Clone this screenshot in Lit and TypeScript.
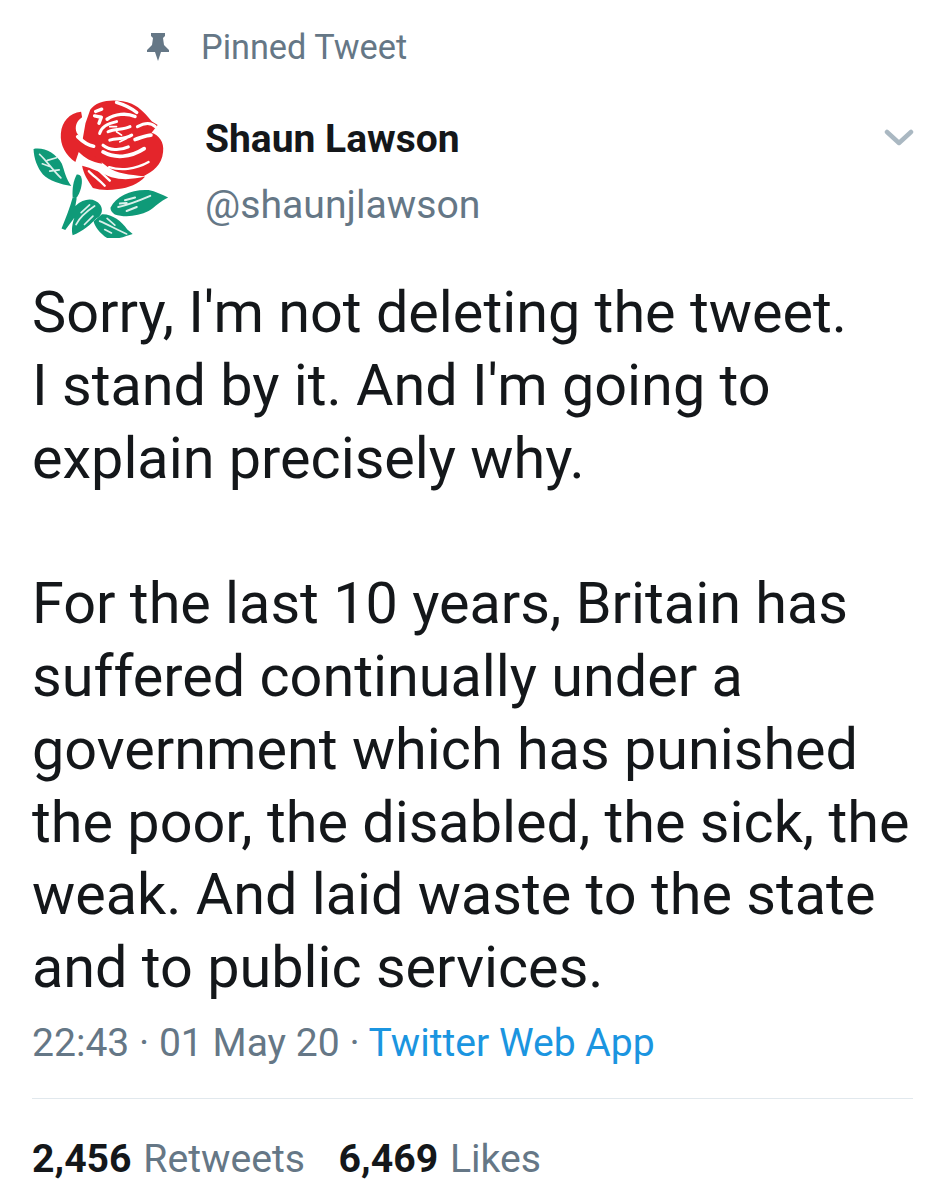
import { LitElement, html, css, svg } from "lit";
import { customElement } from "lit/decorators.js";

const rose = svg`
<g fill="#e4252b">
<path d="M125 160 C128 125 150 100 185 96 L188 112 C172 122 165 140 172 158 C185 180 215 195 235 220 L248 250 C215 245 195 232 178 215 L168 245 C140 225 122 195 125 160Z"/>
<path d="M212 90 C232 60 290 55 335 72 C362 84 378 105 395 125 L412 135 L394 158 C415 165 432 185 428 215 C424 255 398 272 370 287 C330 282 290 280 262 258 C230 235 205 210 190 175 L198 130Z"/>
<path d="M188 256 C215 262 245 278 275 290 C310 300 345 295 375 288 C355 310 325 322 295 325 C265 330 240 328 220 322 C205 300 192 280 188 256Z"/>
</g>
<g fill="none" stroke="#fff" stroke-linecap="round" stroke-linejoin="round">
<path stroke-width="10" d="M228 95 L246 88 M225 108 L245 112 L238 130 M290 68 C310 74 330 82 350 98 M262 118 C285 102 320 98 345 110"/>
<path stroke-width="9" d="M240 160 C245 140 265 130 290 125 M265 155 C285 145 310 150 330 140 M270 180 C290 172 310 180 335 165 M250 195 C268 210 300 212 325 200 M352 140 C370 130 390 125 405 140"/>
<path stroke-width="11" d="M175 170 C190 185 205 195 222 198 M250 215 C285 235 330 232 372 205 M345 178 C365 172 380 165 392 165"/>
<path stroke-width="7" d="M268 260 C300 270 345 268 385 245 M230 262 L270 300 M208 272 C220 285 235 295 255 315"/>
<path stroke-width="5" d="M290 155 L305 165 M270 140 L290 140 M300 185 L320 175"/>
</g>
<g fill="#0f9a78">
<path d="M44 206 C75 200 110 218 128 250 C136 272 140 295 156 316 C125 312 90 300 72 282 C55 260 45 235 44 206Z"/>
<path d="M172 282 C185 280 190 295 186 315 C182 335 176 345 170 352 L160 350 C158 325 162 300 172 282Z"/>
<path d="M160 350 L172 352 L168 375 C195 350 225 350 242 372 C252 388 245 405 230 412 C215 428 190 450 160 462 C155 445 160 425 165 410 L138 446 L127 442 C140 410 152 380 160 350Z"/>
<path d="M246 400 C275 398 305 420 322 445 L338 458 C315 465 285 478 262 470 C240 455 225 435 222 420 Z"/>
<path d="M272 380 C290 345 335 325 385 328 C405 332 425 342 443 350 C420 360 405 378 385 390 C355 405 315 410 285 400 C277 395 272 388 272 380Z"/>
</g>
<g fill="none" stroke="#fff" stroke-linecap="round" stroke-opacity="0.85">
<path stroke-width="5" d="M62 222 C80 238 95 262 125 292 M85 240 L112 232 M70 250 L92 258 M92 272 L120 268"/>
<path stroke-width="6" d="M295 378 C325 372 355 360 390 345 M315 358 L345 350 M320 390 L350 378 M300 368 L320 366"/>
<path stroke-width="5" d="M170 430 C180 410 195 395 225 375 M185 395 L210 372 M195 430 L220 405"/>
<path stroke-width="5" d="M240 420 C265 430 290 445 320 458 M262 412 L285 432 M255 445 L275 455"/>
</g>`;

@customElement("app-root")
export class AppRoot extends LitElement {
  static styles = css`
    :host {
      display: block;
      width: 945px;
      height: 1200px;
      box-sizing: border-box;
      padding: 0 32px;
      background: #fff;
      overflow: hidden;
      font-family: Roboto, "Liberation Sans", sans-serif;
      color: #14171a;
    }
    .pinned {
      display: flex;
      align-items: center;
      height: 94px;
      padding-left: 115px;
      gap: 32px;
      font-size: 34.3px;
      color: #657786;
    }
    .pin { width: 22px; height: 28px; flex: none; }
    .author {
      display: flex;
      align-items: flex-start;
      height: 142px;
    }
    .rose { width: 137px; height: 140px; flex: none; margin-top: 4px; }
    .names { flex: 1; padding: 24px 0 0 36px; }
    .name { font-size: 39px; font-weight: 700; line-height: 42px; }
    .handle { font-size: 39.2px; color: #657786; line-height: 42px; margin-top: 24px; }
    .chev { width: 30px; height: 20px; flex: none; margin: 34px -1px 0 0; }
    .body {
      margin: 41px 0 0;
      font-size: 57.55px;
      line-height: 72.8px;
      white-space: pre-line;
    }
    .meta {
      font-size: 39.1px;
      line-height: 44px;
      color: #657786;
      margin-top: 16px;
    }
    .meta span { color: #1b95e0; }
    hr {
      border: 0;
      border-top: 1px solid #e1e8ed;
      margin: 33px 0 0;
    }
    .stats {
      display: flex;
      gap: 33.5px;
      font-size: 39.2px;
      line-height: 44px;
      margin-top: 38px;
      color: #657786;
    }
    .stats b { font-weight: 700; color: #14171a; margin-right: 2px; }
  `;

  render() {
    return html`
      <div class="pinned">
        <svg class="pin" viewBox="0 0 22 28"><path fill="#657786" d="M4 0 H18 V3 L16 5 L17 12 L22 17 V19 H14 L11 28 L8 19 H0 V17 L5 12 L6 5 L4 3Z"/></svg>
        <span>Pinned Tweet</span>
      </div>
      <div class="author">
        <svg class="rose" viewBox="40 55 405 415">${rose}</svg>
        <div class="names">
          <div class="name">Shaun Lawson</div>
          <div class="handle">@shaunjlawson</div>
        </div>
        <svg class="chev" viewBox="0 0 30 20"><path fill="none" stroke="#aab8c2" stroke-width="4.5" stroke-linecap="round" stroke-linejoin="round" d="M3 4 L15 15 L27 4"/></svg>
      </div>
      <div class="body">Sorry, I'm not deleting the tweet.
I stand by it. And I'm going to
explain precisely why.

For the last 10 years, Britain has
suffered continually under a
government which has punished
the poor, the disabled, the sick, the
weak. And laid waste to the state
and to public services.</div>
      <div class="meta">22:43 · 01 May 20 · <span>Twitter Web App</span></div>
      <hr />
      <div class="stats">
        <div><b>2,456</b> Retweets</div>
        <div><b>6,469</b> Likes</div>
      </div>
    `;
  }
}
